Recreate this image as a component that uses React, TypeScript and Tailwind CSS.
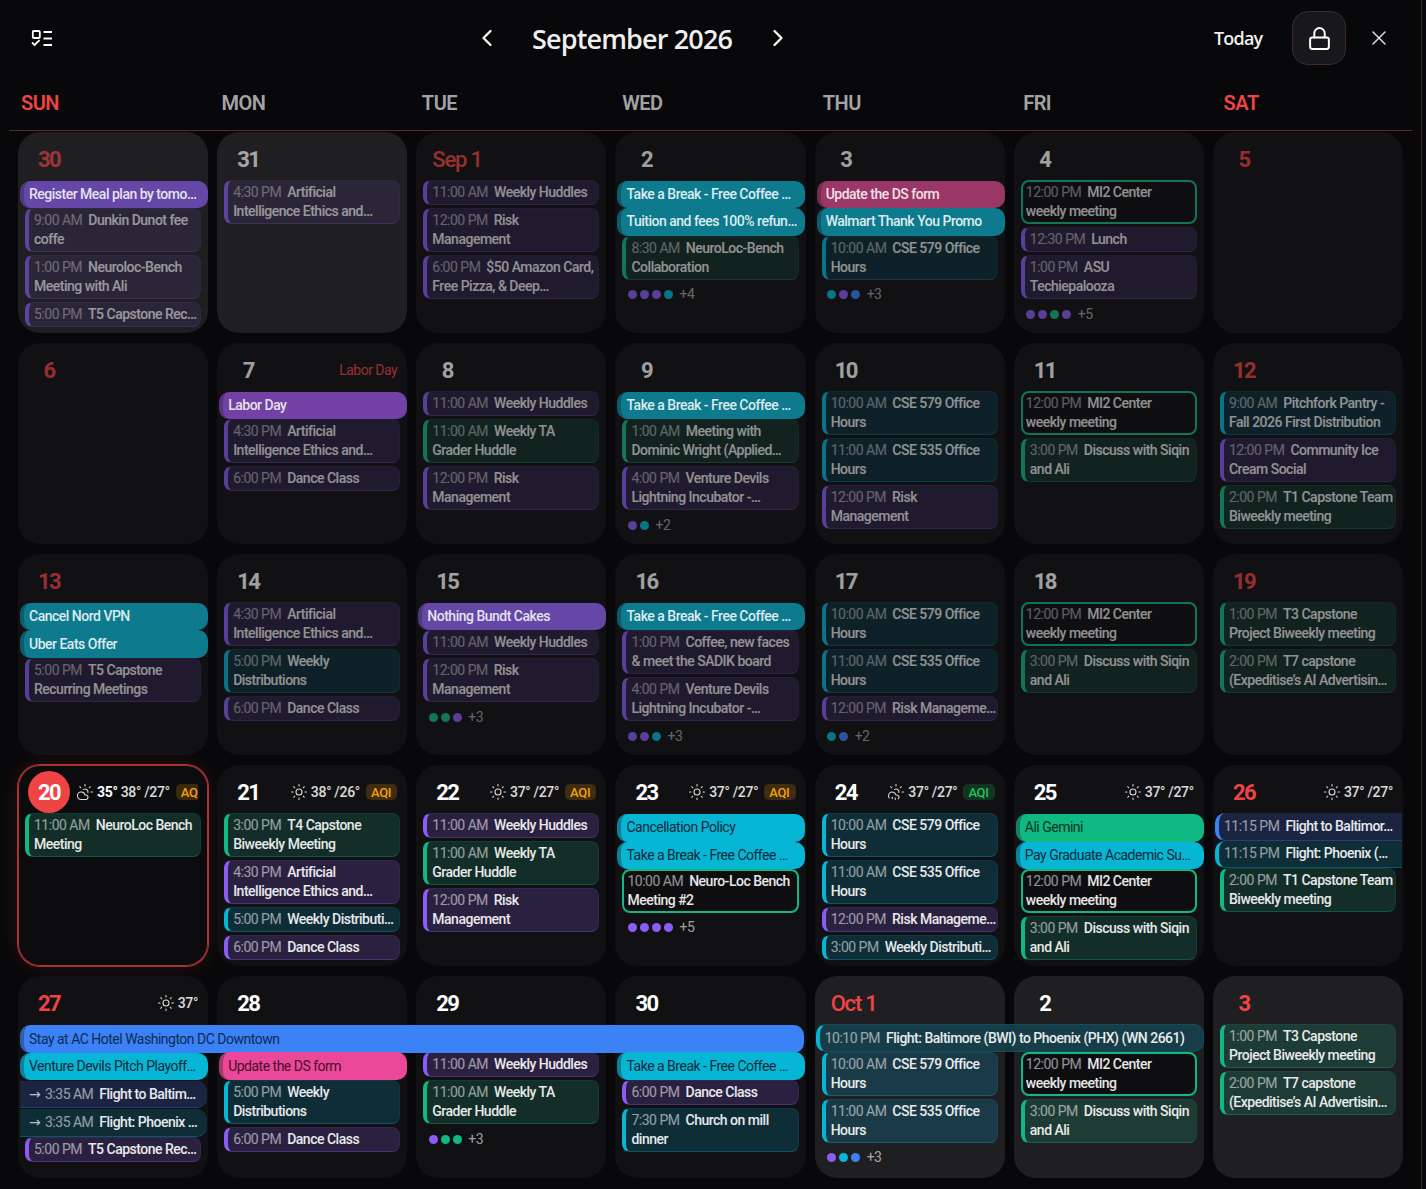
import React from "react";
import { ChevronLeft, ChevronRight, Lock, X, Sun, CloudSun, CloudSunRain } from "lucide-react";

type C = "p" | "g" | "c" | "b";
type Ev =
  | { k: "a"; c: "p" | "g" | "c" | "b" | "m" | "v"; t: string; w?: string }
  | { k: "t"; c: C; h: string; t: string }
  | { k: "o"; h: string; t: string }
  | { k: "f"; c: "b" | "c"; h: string; t: string; start?: boolean; arrow?: boolean }
  | { k: "s" }
  | { k: "x"; h: string; t: string };

type Day = {
  n: string;
  red?: boolean;
  past?: boolean;
  other?: boolean;
  today?: boolean;
  label?: string;
  ev?: Ev[];
  dots?: [string, string];
  w?: { i?: "sun" | "cloud" | "rain"; now?: string; t: string; aqi?: "a" | "g" };
};

const accent = {
  p: "border-[#8b5cf6]/10 border-b-[#8b5cf6]/30 border-l-[#8b5cf6]",
  g: "border-[#10b981]/10 border-b-[#10b981]/30 border-l-[#10b981]",
  c: "border-[#06b6d4]/10 border-b-[#06b6d4]/30 border-l-[#06b6d4]",
  b: "border-[#3b82f6]/10 border-b-[#3b82f6]/30 border-l-[#3b82f6]",
};
const timedBg = { p: "bg-[#2a2140]", g: "bg-[#132e28]", c: "bg-[#0f2d37]", b: "bg-[#1b2542]" };
const timedOtherBg = { p: "bg-[#342a47]", g: "bg-[#1e3b35]", c: "bg-[#1a3a47]", b: "bg-[#1b2542]" };
const allDay = {
  p: "bg-[#8b5cf6] border-l-[#6042ac] text-[#1d1238]",
  v: "bg-[#a855f7] border-l-[#7a3fb5] text-[#1d1238]",
  g: "bg-[#10b981] border-l-[#12805e] text-[#073325]",
  c: "bg-[#06b6d4] border-l-[#0e8098] text-[#0c2a3a]",
  b: "bg-[#3b82f6] border-l-[#2f5fa8] text-[#0f2a55]",
  m: "bg-[#ec4899] border-l-[#a53a70] text-[#45102b]",
};
const allDayPast = {
  p: "bg-[#6547a8] border-l-[#4c3a80] text-[#e4e2ea]",
  v: "bg-[#7340a5] border-l-[#583480] text-[#e4e2ea]",
  g: "bg-[#12805e] border-l-[#0f5e46] text-[#e2ecea]",
  c: "bg-[#0e7a8d] border-l-[#0f5a6a] text-[#dcebef]",
  b: "bg-[#2f5fa8] border-l-[#26487e] text-[#e2e8f2]",
  m: "bg-[#9b3766] border-l-[#71304f] text-[#eee0e8]",
};
const dotColor: Record<string, string> = {
  p: "bg-[#8b5cf6]",
  g: "bg-[#10b981]",
  c: "bg-[#06b6d4]",
  b: "bg-[#3b82f6]",
};

const AI: Ev = { k: "t", c: "p", h: "4:30 PM", t: "Artificial Intelligence Ethics and…" };
const RISK: Ev = { k: "t", c: "p", h: "12:00 PM", t: "Risk Management" };
const HUDDLE: Ev = { k: "t", c: "p", h: "11:00 AM", t: "Weekly Huddles" };
const TA: Ev = { k: "t", c: "g", h: "11:00 AM", t: "Weekly TA\nGrader Huddle" };
const DANCE: Ev = { k: "t", c: "p", h: "6:00 PM", t: "Dance Class" };
const MI2: Ev = { k: "o", h: "12:00 PM", t: "MI2 Center weekly meeting" };
const SIQIN: Ev = { k: "t", c: "g", h: "3:00 PM", t: "Discuss with Siqin and Ali" };
const CSE579: Ev = { k: "t", c: "c", h: "10:00 AM", t: "CSE 579 Office Hours" };
const CSE535: Ev = { k: "t", c: "c", h: "11:00 AM", t: "CSE 535 Office Hours" };
const BREAK: Ev = { k: "a", c: "c", t: "Take a Break - Free Coffee …" };
const VENTURE: Ev = { k: "t", c: "p", h: "4:00 PM", t: "Venture Devils Lightning Incubator -…" };
const T3: Ev = { k: "t", c: "g", h: "1:00 PM", t: "T3 Capstone Project Biweekly meeting" };
const T7: Ev = { k: "t", c: "g", h: "2:00 PM", t: "T7 capstone (Expeditise’s AI Advertisin…" };
const T1: Ev = { k: "t", c: "g", h: "2:00 PM", t: "T1 Capstone Team Biweekly meeting" };

const days: Day[] = [
  { n: "30", red: true, past: true, other: true, ev: [
    { k: "a", c: "p", t: "Register Meal plan by tomo…" },
    { k: "t", c: "p", h: "9:00 AM", t: "Dunkin Dunot fee coffe" },
    { k: "t", c: "p", h: "1:00 PM", t: "Neuroloc-Bench Meeting with Ali" },
    { k: "t", c: "p", h: "5:00 PM", t: "T5 Capstone Rec…" },
  ] },
  { n: "31", past: true, other: true, ev: [AI] },
  { n: "Sep 1", red: true, past: true, ev: [HUDDLE, RISK, { k: "t", c: "p", h: "6:00 PM", t: "$50 Amazon Card, Free Pizza, & Deep…" }] },
  { n: "2", past: true, ev: [BREAK, { k: "a", c: "c", t: "Tuition and fees 100% refun…" }, { k: "t", c: "g", h: "8:30 AM", t: "NeuroLoc-Bench Collaboration" }], dots: ["pppc", "+4"] },
  { n: "3", past: true, ev: [{ k: "a", c: "m", t: "Update the DS form" }, { k: "a", c: "c", t: "Walmart Thank You Promo" }, CSE579], dots: ["cpb", "+3"] },
  { n: "4", past: true, ev: [MI2, { k: "t", c: "p", h: "12:30 PM", t: "Lunch" }, { k: "t", c: "p", h: "1:00 PM", t: "ASU Techiepalooza" }], dots: ["ppgp", "+5"] },
  { n: "5", red: true, past: true },

  { n: "6", red: true, past: true },
  { n: "7", past: true, label: "Labor Day", ev: [{ k: "a", c: "v", t: "Labor Day" }, AI, DANCE] },
  { n: "8", past: true, ev: [HUDDLE, TA, RISK] },
  { n: "9", past: true, ev: [BREAK, { k: "t", c: "g", h: "1:00 AM", t: "Meeting with Dominic Wright (Applied…" }, VENTURE], dots: ["pc", "+2"] },
  { n: "10", past: true, ev: [CSE579, CSE535, RISK] },
  { n: "11", past: true, ev: [MI2, SIQIN] },
  { n: "12", red: true, past: true, ev: [{ k: "t", c: "c", h: "9:00 AM", t: "Pitchfork Pantry - Fall 2026 First Distribution" }, { k: "t", c: "p", h: "12:00 PM", t: "Community Ice Cream Social" }, T1] },

  { n: "13", red: true, past: true, ev: [{ k: "a", c: "c", t: "Cancel Nord VPN" }, { k: "a", c: "c", t: "Uber Eats Offer" }, { k: "t", c: "p", h: "5:00 PM", t: "T5 Capstone Recurring Meetings" }] },
  { n: "14", past: true, ev: [AI, { k: "t", c: "c", h: "5:00 PM", t: "Weekly Distributions" }, DANCE] },
  { n: "15", past: true, ev: [{ k: "a", c: "p", t: "Nothing Bundt Cakes" }, HUDDLE, RISK], dots: ["ggp", "+3"] },
  { n: "16", past: true, ev: [BREAK, { k: "t", c: "p", h: "1:00 PM", t: "Coffee, new faces & meet the SADIK board" }, VENTURE], dots: ["ppc", "+3"] },
  { n: "17", past: true, ev: [CSE579, CSE535, { k: "t", c: "p", h: "12:00 PM", t: "Risk Manageme…" }], dots: ["cb", "+2"] },
  { n: "18", past: true, ev: [MI2, SIQIN] },
  { n: "19", red: true, past: true, ev: [T3, T7] },

  { n: "20", red: true, today: true, w: { i: "cloud", now: "35°", t: "38° /27°", aqi: "a" }, ev: [{ k: "t", c: "g", h: "11:00 AM", t: "NeuroLoc Bench Meeting" }] },
  { n: "21", w: { t: "38° /26°", aqi: "a" }, ev: [
    { k: "t", c: "g", h: "3:00 PM", t: "T4 Capstone Biweekly Meeting" },
    AI,
    { k: "t", c: "c", h: "5:00 PM", t: "Weekly Distributi…" },
    DANCE,
  ] },
  { n: "22", w: { t: "37° /27°", aqi: "a" }, ev: [HUDDLE, TA, RISK] },
  { n: "23", w: { t: "37° /27°", aqi: "a" }, ev: [{ k: "a", c: "c", t: "Cancellation Policy" }, BREAK, { k: "o", h: "10:00 AM", t: "Neuro-Loc Bench Meeting #2" }], dots: ["pppp", "+5"] },
  { n: "24", w: { i: "rain", t: "37° /27°", aqi: "g" }, ev: [CSE579, CSE535, { k: "t", c: "p", h: "12:00 PM", t: "Risk Manageme…" }, { k: "t", c: "c", h: "3:00 PM", t: "Weekly Distributi…" }] },
  { n: "25", w: { t: "37° /27°" }, ev: [{ k: "a", c: "g", t: "Ali Gemini" }, { k: "a", c: "c", t: "Pay Graduate Academic Su…" }, MI2, SIQIN] },
  { n: "26", red: true, w: { t: "37° /27°" }, ev: [
    { k: "f", c: "b", h: "11:15 PM", t: "Flight to Baltimor…", start: true },
    { k: "f", c: "c", h: "11:15 PM", t: "Flight: Phoenix (…", start: true },
    T1,
  ] },

  { n: "27", red: true, w: { t: "37°" }, ev: [
    { k: "a", c: "b", t: "Stay at AC Hotel Washington DC Downtown", w: "w-[784px]" },
    { k: "a", c: "c", t: "Venture Devils Pitch Playoff…" },
    { k: "f", c: "b", h: "3:35 AM", t: "Flight to Baltim…", arrow: true },
    { k: "f", c: "c", h: "3:35 AM", t: "Flight: Phoenix …", arrow: true },
    { k: "t", c: "p", h: "5:00 PM", t: "T5 Capstone Rec…" },
  ] },
  { n: "28", ev: [{ k: "s" }, { k: "a", c: "m", t: "Update the DS form" }, { k: "t", c: "c", h: "5:00 PM", t: "Weekly Distributions" }, DANCE] },
  { n: "29", ev: [{ k: "s" }, HUDDLE, TA], dots: ["pgg", "+3"] },
  { n: "30", ev: [{ k: "s" }, BREAK, DANCE, { k: "t", c: "c", h: "7:30 PM", t: "Church on mill dinner" }] },
  { n: "Oct 1", red: true, other: true, ev: [{ k: "x", h: "10:10 PM", t: "Flight: Baltimore (BWI) to Phoenix (PHX) (WN 2661)" }, CSE579, CSE535], dots: ["pcb", "+3"] },
  { n: "2", other: true, ev: [{ k: "s" }, MI2, SIQIN] },
  { n: "3", red: true, other: true, ev: [T3, T7] },
];

function Label({ h, t }: { h: string; t: string }) {
  const oneLine = t.endsWith("…") && t.length <= 18;
  return (
    <div className={`overflow-hidden ${oneLine ? "whitespace-nowrap" : "line-clamp-2 whitespace-pre-line"}`}>
      <span className="text-white/55 mr-[6px]">{h}</span>
      <span className="font-medium text-white/90">{t}</span>
    </div>
  );
}

function EventItem({ e, day }: { e: Ev; day: Day }) {
  const dim = day.past ? "opacity-60" : "";
  if (e.k === "s") return <div className="h-[28px] shrink-0" />;
  if (e.k === "a") {
    const color = day.past ? `${allDayPast[e.c]} font-medium` : allDay[e.c];
    return (
      <div
        className={`relative z-10 first:mt-[1px] h-[27.3px] ml-[2px] shrink-0 flex items-center rounded-[10px] border-l-[4px] pl-[5px] pr-[2px] whitespace-nowrap overflow-hidden ${e.w ?? "w-[188px]"} ${color}`}
      >
        {e.t}
      </div>
    );
  }
  if (e.k === "x") {
    return (
      <div className="relative z-10 ml-[1px] w-[388px] h-[27.3px] shrink-0 flex items-center rounded-[10px] border border-[#06b6d4]/15 border-l-[4px] border-l-[#06b6d4] bg-[#16404d]/90 pl-[5px] whitespace-nowrap">
        <span className="text-white/55 mr-[6px]">{e.h}</span>
        <span className="font-medium text-white/90">{e.t}</span>
      </div>
    );
  }
  if (e.k === "f") {
    const bg = e.c === "b" ? "bg-[#1b2542] border-b-[#3b82f6]/30" : "bg-[#0f2d37] border-b-[#06b6d4]/30";
    const start = e.start
      ? `rounded-l-[10px] border-l-[4px] pl-[5px] ${e.c === "b" ? "border-l-[#3b82f6]" : "border-l-[#06b6d4]"}`
      : "rounded-r-[10px] mt-[1px] pl-[9px]";
    return (
      <div className={`ml-[2px] w-[187px] h-[27.3px] shrink-0 flex items-center whitespace-nowrap overflow-hidden border-b ${bg} ${start}`}>
        {e.arrow && <span className="[font-family:'DejaVu_Sans',sans-serif] tracking-normal text-[14px] text-white/70 w-[16px] shrink-0">→</span>}
        <span className="text-white/55 mr-[6px]">{e.h}</span>
        <span className="font-medium text-white/90">{e.t}</span>
      </div>
    );
  }
  if (e.k === "o") {
    return (
      <div className={`mx-[7px] mb-[3px] shrink-0 rounded-[8px] border-2 border-[#10b981] bg-[#0e0e10] pl-[3px] pr-[1px] py-[1px] leading-[19px] ${dim}`}>
        <Label h={e.h} t={e.t} />
      </div>
    );
  }
  const colors = `${accent[e.c]} ${day.other ? timedOtherBg[e.c] : timedBg[e.c]}`;
  return (
    <div className={`mx-[7px] mb-[3px] shrink-0 rounded-[8px] border border-l-[4px] pl-[5px] pr-[1px] py-[2px] leading-[19px] ${colors} ${dim}`}>
      <Label h={e.h} t={e.t} />
    </div>
  );
}

function Weather({ w }: { w: NonNullable<Day["w"]> }) {
  const Icon = w.i === "cloud" ? CloudSun : w.i === "rain" ? CloudSunRain : Sun;
  return (
    <div className="ml-auto mr-[10px] min-w-0 h-[42px] flex items-center gap-[3px] overflow-hidden whitespace-nowrap text-white/85 font-medium text-[14px] tracking-[-0.3px]">
      <Icon size={18} strokeWidth={1.4} className="text-white/85 shrink-0" />
      {w.now && <span className="font-bold text-white">{w.now}</span>}
      <span>{w.t}</span>
      {w.aqi && (
        <span
          className={`ml-[3px] pl-[5px] pr-[6px] h-[16px] rounded-[5px] shrink-0 flex items-center text-[13px] ${w.aqi === "a" ? "bg-[#f59e0b]/20 text-[#f59e0b]" : "bg-[#22c55e]/20 text-[#22c55e]"}`}
        >
          AQI
        </span>
      )}
    </div>
  );
}

function DayCell({ d }: { d: Day }) {
  const bg = d.other ? "bg-[#1f1f22]" : d.today ? "bg-[#0c0c0e]" : "bg-[#111113]";
  const ring = d.today
    ? "shadow-[0_0_0_1px_#a83434,inset_0_0_0_1px_#a83434,0_0_22px_rgba(239,68,68,0.16)]"
    : "";
  const hasOver = d.ev?.some((e) => (e.k === "a" && e.w) || e.k === "x");
  const dim = d.past ? "opacity-60" : "";
  const month = d.n.length > 2;
  return (
    <div className={`relative rounded-[22px] ${bg} ${ring} ${hasOver ? "z-10" : ""}`}>
      <div className="h-full flex flex-col">
        <div className="h-[48px] shrink-0 flex items-start pt-[6px]">
          <div
            className={`ml-[10px] mr-[6px] h-[42px] min-w-[42px] shrink-0 px-[6px] flex items-center justify-center rounded-full text-[22px] ${month ? "font-medium tracking-[-1.2px]" : "font-bold tracking-[-1.6px]"} ${d.today ? "bg-[#ef4444] text-white" : d.red ? "text-[#ef4444]" : "text-white"} ${dim}`}
          >
            {d.n}
          </div>
          {d.w && <Weather w={d.w} />}
          {d.label && (
            <div className={`ml-auto h-[42px] pr-[10px] flex items-center text-[#ef4444] text-[14px] ${dim}`}>{d.label}</div>
          )}
        </div>
        <div className="flex flex-col">
          {d.ev?.map((e, i) => <EventItem key={i} e={e} day={d} />)}
          {d.dots && (
            <div className={`ml-[12.5px] mt-[1px] h-[22px] flex items-center gap-[3px] text-white/60 ${dim}`}>
              {d.dots[0].split("").map((c, i) => (
                <span key={i} className={`w-[9px] h-[9px] rounded-full ${dotColor[c]}`} />
              ))}
              <span className="ml-[3.5px]">{d.dots[1]}</span>
            </div>
          )}
        </div>
      </div>
    </div>
  );
}

const heads = ["SUN", "MON", "TUE", "WED", "THU", "FRI", "SAT"];

export default function App() {
  return (
    <div className="w-[1426px] h-[1189px] bg-[#08080a] overflow-hidden [font-family:Roboto,sans-serif] text-[14px] tracking-[-0.5px] text-white">
      <div className="w-[1422px] h-full border-r border-[#3a2428]">
        <header className="h-[76px] flex items-center [font-family:'Open_Sans',sans-serif] tracking-normal">
          <svg width="22" height="17" viewBox="0 0 22 17" fill="none" stroke="white" strokeWidth="1.8" className="ml-[31px]">
            <rect x="1.8" y="1" width="7" height="7" rx="1" />
            <path d="M1 12.5 L3.6 15 L8.6 10.2" />
            <path d="M12.5 2H21M12.5 8.5H21M12.5 15H21" />
          </svg>
          <ChevronLeft size={28} strokeWidth={2} className="ml-[420px] text-white/95" />
          <div className="ml-[31px] w-[202px] text-[27px] leading-none font-semibold text-white/95 tracking-[-0.85px] whitespace-nowrap">September 2026</div>
          <ChevronRight size={28} strokeWidth={2} className="ml-[30px] text-white/95" />
          <div className="ml-[422px] text-[18px] font-semibold text-white/95 tracking-[-0.8px]">Today</div>
          <button className="ml-[30px] w-[54px] h-[54px] rounded-[16px] bg-[#17171c] border border-[#40282b] flex items-center justify-center">
            <Lock size={25} strokeWidth={1.9} className="text-white" />
          </button>
          <X size={24} strokeWidth={1.5} className="ml-[21px] text-white/85" />
        </header>
        <div className="ml-[9px] w-[1403px] h-[55px] grid grid-cols-7 border-b border-[#5a2a2e]">
          {heads.map((h, i) => (
            <div
              key={h}
              className={`pl-[12px] pt-[14px] text-[20px] leading-[26px] font-semibold tracking-[-0.5px] ${i === 0 || i === 6 ? "text-[#ef4444]" : "text-[#a3a3a6]"}`}
            >
              {h}
            </div>
          ))}
        </div>
        <div className="ml-[18px] w-[1385px] h-[1045.5px] mt-[1px] grid grid-cols-7 grid-rows-5 gap-x-[9.17px] gap-y-[10px]">
          {days.map((d, i) => (
            <DayCell key={i} d={d} />
          ))}
        </div>
      </div>
    </div>
  );
}
